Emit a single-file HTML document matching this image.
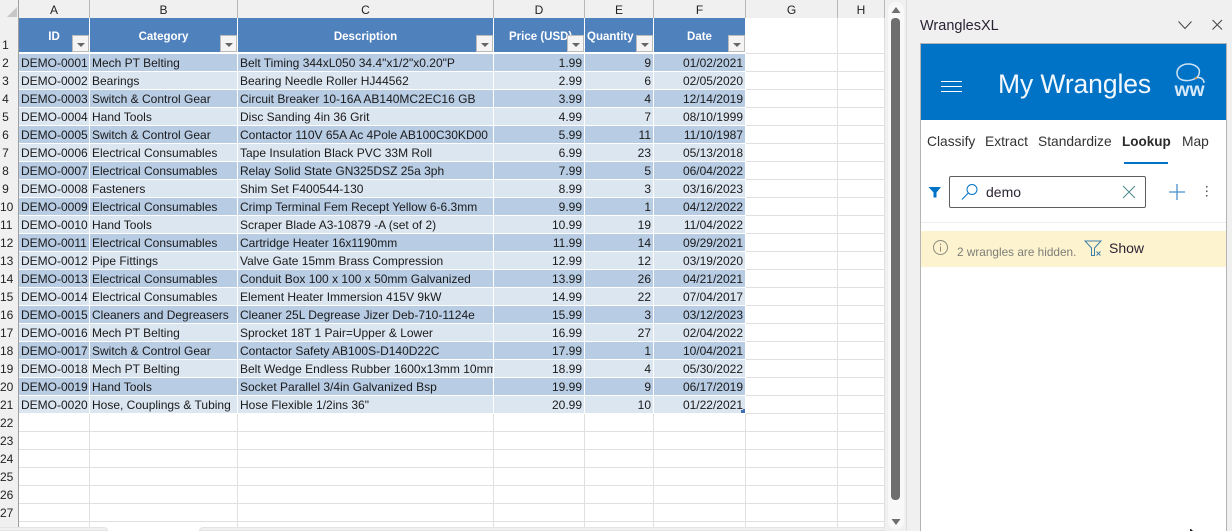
<!DOCTYPE html>
<html><head><meta charset="utf-8">
<style>
html,body{margin:0;padding:0;width:1232px;height:531px;overflow:hidden;background:#f0f0f0;font-family:"Liberation Sans",sans-serif}
.abs{position:absolute}
#grid{position:absolute;left:19px;top:18px;border-collapse:separate;border-spacing:0;table-layout:fixed;width:866px;background:#fff}
#grid td{padding:0;border-right:1px solid #e0e0e0;border-bottom:1px solid #e0e0e0;height:17px;line-height:17px;font-size:12px;color:#1a1a1a;white-space:nowrap;overflow:hidden;box-sizing:content-box}
#grid tr.h td{height:36px;box-sizing:border-box}
#grid tr.h td.c{background:#4f81bd;border-right:1px solid #fff;border-bottom:2px solid #fff;color:#fff;font-weight:bold;font-size:11.5px;text-align:center;line-height:14px;vertical-align:top;padding:12px 0 0 0;position:relative}
#grid tr.o td.c{background:#b8cce4;border-color:#fff}
#grid tr.e td.c{background:#dce6f1;border-color:#fff}
#grid td.c{padding-left:2px;padding-top:1px;line-height:16px;box-sizing:border-box;height:18px}
#grid td.r{text-align:right;padding-right:2px;padding-left:0}
.fb{position:absolute;width:17px;height:17px;box-sizing:border-box;background:#f4f4f4;border:1px solid #bcbcbc;bottom:0;right:0}
.fb:after{content:"";position:absolute;left:4px;top:7px;border-left:4px solid transparent;border-right:4px solid transparent;border-top:4px solid #666}
.colh{position:absolute;top:0;height:18px;line-height:20px;text-align:center;font-size:12px;color:#222;background:#f0f0f0;border-right:1px solid #b8b8b8;box-sizing:border-box}
.rowh{position:absolute;left:0;width:11px;text-align:center;font-size:12px;color:#222;height:18px;line-height:19px}
.tab{position:absolute;top:133px;font-size:13.8px;color:#333;line-height:18px;white-space:nowrap}
</style></head><body>

<div class="abs" style="left:0;top:0;width:19px;height:527px;background:#f0f0f0;border-right:1px solid #9f9f9f;box-sizing:border-box"></div>
<svg class="abs" style="left:6px;top:6px" width="12" height="12"><path d="M11 1V11H1Z" fill="#c6c6c6"/></svg>

<div class="colh" style="left:19px;width:71px">A</div>
<div class="colh" style="left:90px;width:148px">B</div>
<div class="colh" style="left:238px;width:256px">C</div>
<div class="colh" style="left:494px;width:91px">D</div>
<div class="colh" style="left:585px;width:69px">E</div>
<div class="colh" style="left:654px;width:92px">F</div>
<div class="colh" style="left:746px;width:92px">G</div>
<div class="colh" style="left:838px;width:47px">H</div>

<div class="rowh" style="top:36px">1</div><div class="rowh" style="top:54px">2</div><div class="rowh" style="top:72px">3</div><div class="rowh" style="top:90px">4</div><div class="rowh" style="top:108px">5</div><div class="rowh" style="top:126px">6</div><div class="rowh" style="top:144px">7</div><div class="rowh" style="top:162px">8</div><div class="rowh" style="top:180px">9</div><div class="rowh" style="top:198px">10</div><div class="rowh" style="top:216px">11</div><div class="rowh" style="top:234px">12</div><div class="rowh" style="top:252px">13</div><div class="rowh" style="top:270px">14</div><div class="rowh" style="top:288px">15</div><div class="rowh" style="top:306px">16</div><div class="rowh" style="top:324px">17</div><div class="rowh" style="top:342px">18</div><div class="rowh" style="top:360px">19</div><div class="rowh" style="top:378px">20</div><div class="rowh" style="top:396px">21</div><div class="rowh" style="top:414px">22</div><div class="rowh" style="top:432px">23</div><div class="rowh" style="top:450px">24</div><div class="rowh" style="top:468px">25</div><div class="rowh" style="top:486px">26</div><div class="rowh" style="top:504px">27</div>

<table id="grid">
<colgroup><col style="width:71px"><col style="width:148px"><col style="width:256px"><col style="width:91px"><col style="width:69px"><col style="width:92px"><col style="width:92px"><col style="width:47px"></colgroup>
<tr class="h"><td class="c">ID<div class="fb"></div></td><td class="c">Category<div class="fb"></div></td><td class="c">Description<div class="fb"></div></td><td class="c" style="text-align:left;padding-left:15px">Price (USD)<div class="fb"></div></td><td class="c" style="text-align:left;padding-left:2px">Quantity<div class="fb"></div></td><td class="c">Date<div class="fb"></div></td><td></td><td></td></tr>
<tr class="o"><td class="c">DEMO-0001</td><td class="c">Mech PT Belting</td><td class="c">Belt Timing 344xL050 34.4"x1/2"x0.20"P</td><td class="c r">1.99</td><td class="c r">9</td><td class="c r">01/02/2021</td><td></td><td></td></tr>
<tr class="e"><td class="c">DEMO-0002</td><td class="c">Bearings</td><td class="c">Bearing Needle Roller HJ44562</td><td class="c r">2.99</td><td class="c r">6</td><td class="c r">02/05/2020</td><td></td><td></td></tr>
<tr class="o"><td class="c">DEMO-0003</td><td class="c">Switch &amp; Control Gear</td><td class="c">Circuit Breaker 10-16A AB140MC2EC16 GB</td><td class="c r">3.99</td><td class="c r">4</td><td class="c r">12/14/2019</td><td></td><td></td></tr>
<tr class="e"><td class="c">DEMO-0004</td><td class="c">Hand Tools</td><td class="c">Disc Sanding 4in 36 Grit</td><td class="c r">4.99</td><td class="c r">7</td><td class="c r">08/10/1999</td><td></td><td></td></tr>
<tr class="o"><td class="c">DEMO-0005</td><td class="c">Switch &amp; Control Gear</td><td class="c">Contactor 110V 65A Ac 4Pole AB100C30KD00</td><td class="c r">5.99</td><td class="c r">11</td><td class="c r">11/10/1987</td><td></td><td></td></tr>
<tr class="e"><td class="c">DEMO-0006</td><td class="c">Electrical Consumables</td><td class="c">Tape Insulation Black PVC 33M Roll</td><td class="c r">6.99</td><td class="c r">23</td><td class="c r">05/13/2018</td><td></td><td></td></tr>
<tr class="o"><td class="c">DEMO-0007</td><td class="c">Electrical Consumables</td><td class="c">Relay Solid State GN325DSZ 25a 3ph</td><td class="c r">7.99</td><td class="c r">5</td><td class="c r">06/04/2022</td><td></td><td></td></tr>
<tr class="e"><td class="c">DEMO-0008</td><td class="c">Fasteners</td><td class="c">Shim Set F400544-130</td><td class="c r">8.99</td><td class="c r">3</td><td class="c r">03/16/2023</td><td></td><td></td></tr>
<tr class="o"><td class="c">DEMO-0009</td><td class="c">Electrical Consumables</td><td class="c">Crimp Terminal Fem Recept Yellow 6-6.3mm</td><td class="c r">9.99</td><td class="c r">1</td><td class="c r">04/12/2022</td><td></td><td></td></tr>
<tr class="e"><td class="c">DEMO-0010</td><td class="c">Hand Tools</td><td class="c">Scraper Blade A3-10879 -A (set of 2)</td><td class="c r">10.99</td><td class="c r">19</td><td class="c r">11/04/2022</td><td></td><td></td></tr>
<tr class="o"><td class="c">DEMO-0011</td><td class="c">Electrical Consumables</td><td class="c">Cartridge Heater 16x1190mm</td><td class="c r">11.99</td><td class="c r">14</td><td class="c r">09/29/2021</td><td></td><td></td></tr>
<tr class="e"><td class="c">DEMO-0012</td><td class="c">Pipe Fittings</td><td class="c">Valve Gate 15mm Brass Compression</td><td class="c r">12.99</td><td class="c r">12</td><td class="c r">03/19/2020</td><td></td><td></td></tr>
<tr class="o"><td class="c">DEMO-0013</td><td class="c">Electrical Consumables</td><td class="c">Conduit Box 100 x 100 x 50mm Galvanized</td><td class="c r">13.99</td><td class="c r">26</td><td class="c r">04/21/2021</td><td></td><td></td></tr>
<tr class="e"><td class="c">DEMO-0014</td><td class="c">Electrical Consumables</td><td class="c">Element Heater Immersion 415V 9kW</td><td class="c r">14.99</td><td class="c r">22</td><td class="c r">07/04/2017</td><td></td><td></td></tr>
<tr class="o"><td class="c">DEMO-0015</td><td class="c">Cleaners and Degreasers</td><td class="c">Cleaner 25L Degrease Jizer Deb-710-1124e</td><td class="c r">15.99</td><td class="c r">3</td><td class="c r">03/12/2023</td><td></td><td></td></tr>
<tr class="e"><td class="c">DEMO-0016</td><td class="c">Mech PT Belting</td><td class="c">Sprocket 18T 1 Pair=Upper &amp; Lower</td><td class="c r">16.99</td><td class="c r">27</td><td class="c r">02/04/2022</td><td></td><td></td></tr>
<tr class="o"><td class="c">DEMO-0017</td><td class="c">Switch &amp; Control Gear</td><td class="c">Contactor Safety AB100S-D140D22C</td><td class="c r">17.99</td><td class="c r">1</td><td class="c r">10/04/2021</td><td></td><td></td></tr>
<tr class="e"><td class="c">DEMO-0018</td><td class="c">Mech PT Belting</td><td class="c">Belt Wedge Endless Rubber 1600x13mm 10mm</td><td class="c r">18.99</td><td class="c r">4</td><td class="c r">05/30/2022</td><td></td><td></td></tr>
<tr class="o"><td class="c">DEMO-0019</td><td class="c">Hand Tools</td><td class="c">Socket Parallel 3/4in Galvanized Bsp</td><td class="c r">19.99</td><td class="c r">9</td><td class="c r">06/17/2019</td><td></td><td></td></tr>
<tr class="e"><td class="c">DEMO-0020</td><td class="c">Hose, Couplings &amp; Tubing</td><td class="c">Hose Flexible 1/2ins 36"</td><td class="c r">20.99</td><td class="c r">10</td><td class="c r">01/22/2021</td><td></td><td></td></tr>
<tr><td></td><td></td><td></td><td></td><td></td><td></td><td></td><td></td></tr>
<tr><td></td><td></td><td></td><td></td><td></td><td></td><td></td><td></td></tr>
<tr><td></td><td></td><td></td><td></td><td></td><td></td><td></td><td></td></tr>
<tr><td></td><td></td><td></td><td></td><td></td><td></td><td></td><td></td></tr>
<tr><td></td><td></td><td></td><td></td><td></td><td></td><td></td><td></td></tr>
<tr><td></td><td></td><td></td><td></td><td></td><td></td><td></td><td></td></tr>
<tr><td style="height:5px;border-bottom:0"></td><td style="height:5px;border-bottom:0"></td><td style="height:5px;border-bottom:0"></td><td style="height:5px;border-bottom:0"></td><td style="height:5px;border-bottom:0"></td><td style="height:5px;border-bottom:0"></td><td style="height:5px;border-bottom:0"></td><td style="height:5px;border-bottom:0"></td></tr>
</table>

<svg class="abs" style="left:741px;top:409px" width="4" height="4"><path d="M0 1H2V0H4V4H0Z" fill="#3f6fb5"/></svg>

<!-- bottom strip -->
<div class="abs" style="left:19px;top:527px;width:866px;height:4px;background:#fff"></div>
<div class="abs" style="left:0;top:527px;width:108px;height:4px;background:#f0f0f0;border:1px solid #e4e4e4;border-left:0;border-radius:0 4px 0 0;box-sizing:border-box"></div>
<div class="abs" style="left:199px;top:527px;width:686px;height:4px;background:#f0f0f0;border:1px solid #e4e4e4;border-radius:4px 0 0 0;box-sizing:border-box"></div>

<!-- vertical scrollbar -->
<div class="abs" style="left:885px;top:0;width:21px;height:531px;background:#f0f0f0"></div>
<div class="abs" style="left:888px;top:2px;width:16px;height:527px;background:#f8f8f8;border-radius:8px"></div>
<div class="abs" style="left:891px;top:18px;width:9px;height:482px;background:#6e6e6e;border-radius:4px"></div>
<svg class="abs" style="left:890px;top:5px" width="12" height="10"><path d="M1.500 8 6 2l4.500 6Z" fill="#6e6e6e"/></svg>
<svg class="abs" style="left:890px;top:517px" width="12" height="10"><path d="M1.500 2h9L6 8Z" fill="#6e6e6e"/></svg>
<div class="abs" style="left:906px;top:0;width:1px;height:531px;background:#dcdcdc"></div>

<!-- pane -->
<div class="abs" style="left:920px;top:16px;font-size:14.500px;line-height:20px;color:#2b2233;font-weight:normal">WranglesXL</div>
<svg class="abs" style="left:1177px;top:18px" width="48" height="14" fill="none" stroke="#444" stroke-width="1"><path d="M1.500 3.500 8 10.500l6.500-7"/><path d="M35.500 2 45 11.500M45 2l-9.500 9.500"/></svg>

<div class="abs" style="left:920px;top:43px;width:307px;height:488px;background:#fff;border:1px solid #b4b4b4;border-bottom:0;box-sizing:border-box"></div>
<div class="abs" style="left:921px;top:44px;width:305px;height:76px;background:#0173c7"></div>
<svg class="abs" style="left:941px;top:80px" width="21" height="13" stroke="#fff" stroke-width="1"><path d="M0 1.500H21M0 6.500H21M0 11.500H21"/></svg>
<div class="abs" style="left:998px;top:66px;font-size:26.500px;line-height:36px;color:#f2f8fd;white-space:nowrap;letter-spacing:-.1px">My Wrangles</div>
<svg class="abs" style="left:1172px;top:62px" width="36" height="36" fill="none"><path d="M24 16C18 20 5 20 5 11 5 5 11 2 16 2 23 2 29 6 27 12 26.500 14 25 15.500 24 16 28 14.500 32 17 32 21" stroke="#cfe5f6" stroke-width="1.500"/><circle cx="24" cy="16" r="1.300" fill="#d8a25e"/><text x="2.500" y="34" font-family="Liberation Sans,sans-serif" font-size="19" font-weight="bold" fill="#d6e9f8" textLength="30" lengthAdjust="spacingAndGlyphs">ww</text></svg>

<div class="tab" style="left:927px">Classify</div>
<div class="tab" style="left:985px">Extract</div>
<div class="tab" style="left:1038px">Standardize</div>
<div class="tab" style="left:1122px;font-weight:bold;color:#2b2b2b;font-size:13.500px">Lookup</div>
<div class="tab" style="left:1182px">Map</div>
<div class="abs" style="left:1124px;top:162px;width:44px;height:2px;background:#0173c7"></div>

<svg class="abs" style="left:928px;top:186px" width="14" height="12"><path d="M.5 1H13L8.500 6.500V11.500H5.500V6.500Z" fill="#0173c7"/></svg>
<div class="abs" style="left:949px;top:176px;width:197px;height:32px;border:1px solid #605e5c;border-radius:2px;background:#fff;box-sizing:border-box"></div>
<svg class="abs" style="left:961px;top:183px" width="18" height="18" fill="none" stroke="#0173c7" stroke-width="1"><circle cx="11" cy="6.500" r="5"/><path d="M7.300 10 1 16.500"/></svg>
<div class="abs" style="left:986px;top:183px;font-size:14px;line-height:18px;color:#2b2233">demo</div>
<svg class="abs" style="left:1122px;top:185px" width="14" height="14" stroke="#4f8a8b" stroke-width="1"><path d="M1 1 13 13M13 1 1 13"/></svg>
<svg class="abs" style="left:1168px;top:183px" width="18" height="18" stroke="#4a90d0" stroke-width="1.300"><path d="M9 1V17M1 9H17"/></svg>
<svg class="abs" style="left:1205px;top:185px" width="4" height="13" fill="#555"><rect x="1" y="1" width="1.500" height="1.500"/><rect x="1" y="5.500" width="1.500" height="1.500"/><rect x="1" y="10" width="1.500" height="1.500"/></svg>

<div class="abs" style="left:921px;top:222px;width:305px;height:1px;background:#eeeeee"></div>
<div class="abs" style="left:921px;top:231px;width:305px;height:36px;background:#fdf3cf"></div>
<svg class="abs" style="left:932px;top:239px" width="17" height="17" fill="none" stroke="#8a8a80" stroke-width="1"><circle cx="8.500" cy="8.500" r="7"/><path d="M8.500 7.500V12.500M8.500 4.500V6"/></svg>
<div class="abs" style="left:957px;top:244px;font-size:11.800px;line-height:16px;color:#7e7e78;white-space:nowrap">2 wrangles are hidden.</div>
<svg class="abs" style="left:1084px;top:240px" width="20" height="17" fill="none" stroke="#3d7fa8" stroke-width="1"><path d="M1 1H17L10.500 8V15.500H7.500V8Z"/><path d="M12.500 11.500l4 4M16.500 11.500l-4 4"/></svg>
<div class="abs" style="left:1109px;top:240px;font-size:14px;line-height:17px;color:#2b2233">Show</div>

<svg class="abs" style="left:1190px;top:529px" width="4" height="2"><path d="M0 0H1L3 2H0Z" fill="#222"/></svg>
</body></html>
